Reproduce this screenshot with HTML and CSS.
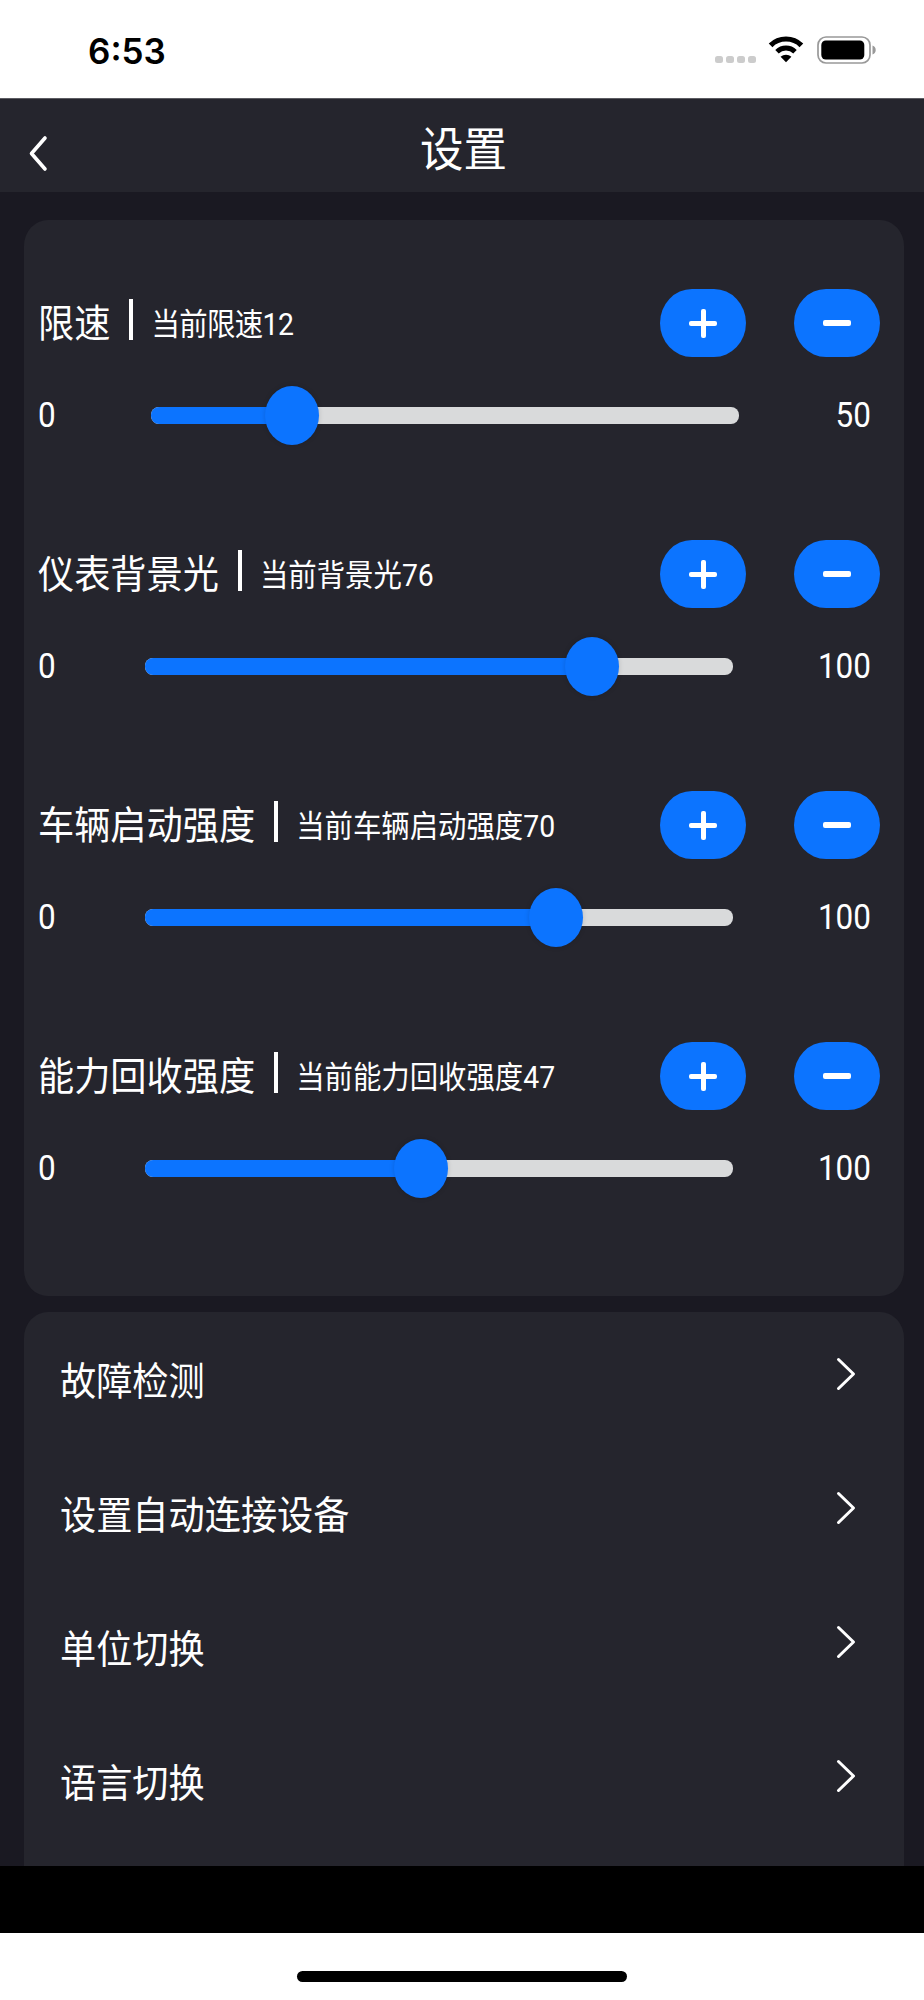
FILE: index.html
```html
<!DOCTYPE html>
<html lang="zh-CN">
<head>
<meta charset="utf-8">
<title>设置</title>
<link rel="stylesheet" href="styles.css">
</head>
<body>
<div class="status">
  <span class="time">6:53</span>
  <div class="status-icons">
    <div class="dots"><i></i><i></i><i></i><i></i></div>
    <svg class="wifi" width="36" height="27" viewBox="0 0 36 27">
      <path d="M2.6 9.3C11 0.9 25 0.9 33.4 9.3" fill="none" stroke="#000" stroke-width="5.2"/>
      <path d="M9 15.7C14 10.9 22 10.9 27 15.7" fill="none" stroke="#000" stroke-width="5"/>
      <path d="M12.6 20.8C15.5 18 20.5 18 23.4 20.8L18 26.3Z" fill="#000"/>
    </svg>
    <svg class="battery" width="60" height="28" viewBox="0 0 60 28">
      <rect x="1" y="1" width="52" height="26" rx="8" fill="none" stroke="#999" stroke-width="1.7"/>
      <rect x="4.3" y="4.5" width="43" height="19" rx="4.5" fill="#000"/>
      <path d="M55.5 9.5C59.8 11 59.8 17 55.5 18.5Z" fill="#999"/>
    </svg>
  </div>
</div>

<header class="nav">
  <svg class="back" width="20" height="38" viewBox="0 0 20 38"><path d="M17 3L3.500 18.500L17 34" fill="none" stroke="#fff" stroke-width="3.600" stroke-linecap="round" stroke-linejoin="round"/></svg>
  <h1 class="nav-title">设置</h1>
</header>

<main class="screen">
  <section class="card sliders">
    <div class="setting">
      <div class="setting-head">
        <span class="name">限速</span><i class="bar"></i><span class="current tight">当前限速12</span>
        <div class="buttons"><button class="btn plus"></button><button class="btn"></button></div>
      </div>
      <div class="range short">
        <span class="num">0</span>
        <div class="track"><div class="fill" style="width:24%"></div><div class="knob" style="left:24%"></div></div>
        <span class="num">50</span>
      </div>
    </div>
    <div class="setting">
      <div class="setting-head">
        <span class="name">仪表背景光</span><i class="bar"></i><span class="current">当前背景光76</span>
        <div class="buttons"><button class="btn plus"></button><button class="btn"></button></div>
      </div>
      <div class="range">
        <span class="num">0</span>
        <div class="track"><div class="fill" style="width:76%"></div><div class="knob" style="left:76%"></div></div>
        <span class="num">100</span>
      </div>
    </div>
    <div class="setting">
      <div class="setting-head">
        <span class="name">车辆启动强度</span><i class="bar"></i><span class="current">当前车辆启动强度70</span>
        <div class="buttons"><button class="btn plus"></button><button class="btn"></button></div>
      </div>
      <div class="range">
        <span class="num">0</span>
        <div class="track"><div class="fill" style="width:70%"></div><div class="knob" style="left:70%"></div></div>
        <span class="num">100</span>
      </div>
    </div>
    <div class="setting">
      <div class="setting-head">
        <span class="name">能力回收强度</span><i class="bar"></i><span class="current">当前能力回收强度47</span>
        <div class="buttons"><button class="btn plus"></button><button class="btn"></button></div>
      </div>
      <div class="range">
        <span class="num">0</span>
        <div class="track"><div class="fill" style="width:47%"></div><div class="knob" style="left:47%"></div></div>
        <span class="num">100</span>
      </div>
    </div>
  </section>

  <section class="card menu">
    <div class="item"><span class="name">故障检测</span><svg class="chev" width="22" height="36" viewBox="0 0 22 36"><path d="M3.500 3.500L18.500 18L3.500 32.500" fill="none" stroke="#fff" stroke-width="3" stroke-linecap="round" stroke-linejoin="round"/></svg></div>
    <div class="item"><span class="name">设置自动连接设备</span><svg class="chev" width="22" height="36" viewBox="0 0 22 36"><path d="M3.500 3.500L18.500 18L3.500 32.500" fill="none" stroke="#fff" stroke-width="3" stroke-linecap="round" stroke-linejoin="round"/></svg></div>
    <div class="item"><span class="name">单位切换</span><svg class="chev" width="22" height="36" viewBox="0 0 22 36"><path d="M3.500 3.500L18.500 18L3.500 32.500" fill="none" stroke="#fff" stroke-width="3" stroke-linecap="round" stroke-linejoin="round"/></svg></div>
    <div class="item"><span class="name">语言切换</span><svg class="chev" width="22" height="36" viewBox="0 0 22 36"><path d="M3.500 3.500L18.500 18L3.500 32.500" fill="none" stroke="#fff" stroke-width="3" stroke-linecap="round" stroke-linejoin="round"/></svg></div>
  </section>
</main>

<div class="black"></div>
<footer class="home"><div class="home-bar"></div></footer>
</body>
</html>
```

FILE: styles.css
```css
* { box-sizing: border-box; }

body {
  margin: 0;
  width: 924px;
  height: 2000px;
  overflow: hidden;
  background: #fff;
  color: #fff;
  font-family: "Noto Sans CJK SC", sans-serif;
  font-weight: 400;
}

.status {
  display: flex;
  justify-content: space-between;
  height: 98px;
  padding: 0 47px 0 88px;
  color: #000;
}

.time {
  margin-top: 30px;
  font: 600 35px/42px Inter, sans-serif;
}

.status-icons { display: flex; padding-top: 36px; }

.dots { display: flex; gap: 3px; padding-top: 19.500px; }
.dots i { width: 8px; height: 7.500px; border-radius: 2.500px; background: #ccc; }
.wifi { margin-left: 12.500px; }
.battery { margin-left: 13px; }

.nav {
  display: grid;
  grid-template-columns: 60px 1fr 60px;
  height: 94px;
  background: #25252d;
  border-top: 1px solid #5c5c62;
}
.back { margin: 36px 0 0 28px; }
.nav-title {
  margin: 18px 0 0 3px;
  font-size: 43.500px;
  line-height: 60px;
  font-weight: 400;
  text-align: center;
  transform: scaleY(1.08);
}

.screen {
  height: 1674px;
  padding: 28px 20px 0 24px;
  overflow: hidden;
  background: #1a1922;
}
.card { border-radius: 24px / 26px; background: #25252d; }

.sliders { height: 1076px; padding-top: 69px; }
.setting { height: 251px; padding: 0 24px 0 14px; }
.setting-head { display: flex; align-items: flex-start; height: 68px; }

.name {
  margin-top: 7px;
  font-size: 36.200px;
  line-height: 48px;
  transform: scaleY(1.08);
  white-space: nowrap;
}
.bar { width: 4px; height: 41px; margin: 10px 18px 0 19px; background: #fff; }
.current {
  margin-top: 16px;
  font-family: Roboto, "Noto Sans CJK SC", sans-serif;
  font-size: 28.400px;
  line-height: 40px;
  transform: scaleY(1.1);
  white-space: nowrap;
}
.tight { letter-spacing: -0.600px; }
.buttons { display: flex; gap: 48px; margin-left: auto; }
.btn {
  display: grid;
  place-items: center;
  width: 86px;
  height: 68px;
  padding: 0;
  border: 0;
  border-radius: 32px / 34px;
  background: #0c74ff;
}
.btn::before, .btn.plus::after {
  content: "";
  grid-area: 1 / 1;
  width: 28px;
  height: 6px;
  border-radius: 2px;
  background: #fff;
}
.btn.plus::before { height: 5px; }
.btn.plus::after { width: 5px; height: 29px; }

.range {
  display: grid;
  grid-template-columns: 106.500px 588.500px 1fr;
  align-items: center;
  height: 60px;
  margin-top: 28px;
}
.range.short { grid-template-columns: 113px 588px 1fr; }
.num {
  font-family: Roboto, sans-serif;
  font-size: 31.500px;
  line-height: 44px;
  transform: translateY(1px) scaleY(1.13);
}
.num:last-child { padding-right: 9px; text-align: right; }
.track {
  position: relative;
  height: 17px;
  border-radius: 8px;
  background: #d9dadb;
}
.fill { height: 100%; border-radius: 8px; background: #0c74ff; }
.knob {
  position: absolute;
  top: -21px;
  width: 54px;
  height: 59px;
  margin-left: -27px;
  border-radius: 50%;
  background: #0c74ff;
  box-shadow: 0 0 5px rgba(0, 0, 0, 0.15);
}

.menu { height: 700px; margin-top: 16px; padding: 42px 47px 0 36px; }
.item { display: flex; justify-content: space-between; height: 134px; }
.item .name { margin-top: 3px; }
.chev { margin-top: 2px; }

.black { height: 67px; background: #000; }
.home { display: flex; justify-content: center; height: 67px; padding-top: 38px; background: #fff; }
.home-bar { width: 330px; height: 11px; border-radius: 6px; background: #000; }
```
